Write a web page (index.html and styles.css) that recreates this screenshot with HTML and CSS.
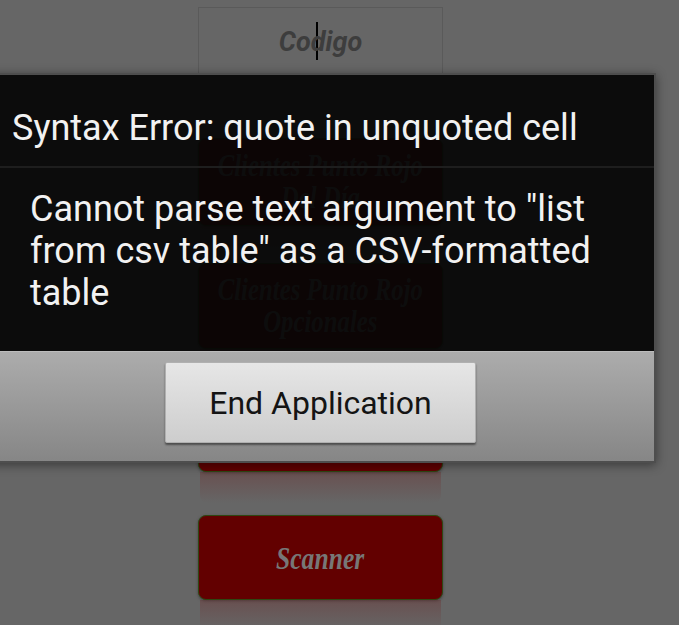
FILE: index.html
```html
<!DOCTYPE html>
<html>
<head>
<meta charset="utf-8">
<link rel="stylesheet" href="styles.css">
</head>
<body>
<div class="page">
  <div class="field"><span class="field-text">Co<span class="cursor"></span>digo</span></div>
  <div class="rbtn rbtn-1"><span class="rlabel">Clientes Punto Rojo<br>Del Día</span></div>
  <div class="reflect"></div>
  <div class="rbtn rbtn-2"><span class="rlabel">Clientes Punto Rojo<br>Opcionales</span></div>
  <div class="reflect"></div>
  <div class="rbtn rbtn-3"><span class="rlabel">Clientes</span></div>
  <div class="reflect"></div>
  <div class="rbtn rbtn-4"><span class="rlabel scanner">Scanner</span></div>
  <div class="reflect"></div>
</div>

<div class="dialog">
  <div class="dlg-title">Syntax Error: quote in unquoted cell</div>
  <div class="dlg-msg">Cannot parse text argument to "list from csv table" as a CSV-formatted table</div>
  <div class="dlg-actions">
    <div class="dlg-btn">End Application</div>
  </div>
</div>
</body>
</html>
```

FILE: styles.css
```css
html, body {
  margin: 0;
  padding: 0;
}
body {
  width: 679px;
  height: 625px;
  overflow: hidden;
  background: #666666;
  position: relative;
  font-family: Roboto, "Liberation Sans", sans-serif;
}
.page {
  display: flex;
  flex-direction: column;
  width: 245px;
  margin-left: 198px;
  padding-top: 7px;
}
.field {
  height: 66px;
  border: 1px solid #5a5a5a;
  display: flex;
  align-items: center;
  justify-content: center;
}
.field-text {
  font-family: Roboto, "Liberation Sans", sans-serif;
  font-weight: bold;
  font-style: italic;
  font-size: 27px;
  color: #3d3d3d;
}
.cursor {
  display: inline-block;
  width: 2px;
  height: 38px;
  background: #000;
  vertical-align: -9px;
  margin-left: 5px;
  margin-right: -7px;
}
.rbtn {
  box-sizing: border-box;
  background: #620000;
  border: 1px solid #2f4712;
  border-radius: 8px;
  display: flex;
  align-items: center;
  justify-content: center;
  text-align: center;
  box-shadow: 0 1px 3px rgba(0,0,0,0.35);
}
.rbtn-1 { margin-top: 63px; height: 88px; }
.rbtn-2 { margin-top: 6px; height: 86px; }
.rbtn-3 { margin-top: 8px; height: 84px; }
.rbtn-4 { margin-top: 12px; height: 85px; }
.reflect {
  height: 31px;
  margin: 0 2px;
  background: linear-gradient(to bottom, rgba(110,40,40,0.35), rgba(102,102,102,0));
  border-radius: 0 0 8px 8px;
}
.rlabel {
  display: inline-block;
  font-family: "Liberation Serif", serif;
  font-weight: bold;
  font-style: italic;
  font-size: 31px;
  line-height: 32px;
  color: #777777;
  transform: scaleX(0.8);
  white-space: nowrap;
}
.scanner {
  font-size: 32px;
}

.dialog {
  position: absolute;
  left: -15px;
  top: 73px;
  width: 667px;
  border: 2px solid #4e4e4e;
  box-shadow: 0 2px 10px rgba(0,0,0,0.45);
  background: rgba(5,5,5,0.93);
  color: #f2f2f2;
}
.dlg-title {
  box-sizing: border-box;
  height: 93px;
  padding: 32px 0 0 25px;
  font-size: 36px;
  line-height: 42px;
  border-bottom: 2px solid #1e1e1e;
  white-space: nowrap;
}
.dlg-msg {
  padding: 20px 40px 37px 43px;
  font-size: 36px;
  line-height: 42px;
}
.dlg-actions {
  height: 110px;
  box-sizing: border-box;
  border-top: 1px solid #bcbcbc;
  background: linear-gradient(to bottom, #acacac, #868686);
  padding-top: 10px;
  display: flex;
  justify-content: center;
}
.dlg-btn {
  width: 309px;
  height: 79px;
  border: 1px solid #b0b0b0;
  border-radius: 2px;
  background: linear-gradient(to bottom, #e6e6e6, #cdcdcd);
  box-shadow: 0 2px 2px rgba(0,0,0,0.45);
  display: flex;
  align-items: center;
  justify-content: center;
  font-size: 32px;
  color: #141414;
}
```
